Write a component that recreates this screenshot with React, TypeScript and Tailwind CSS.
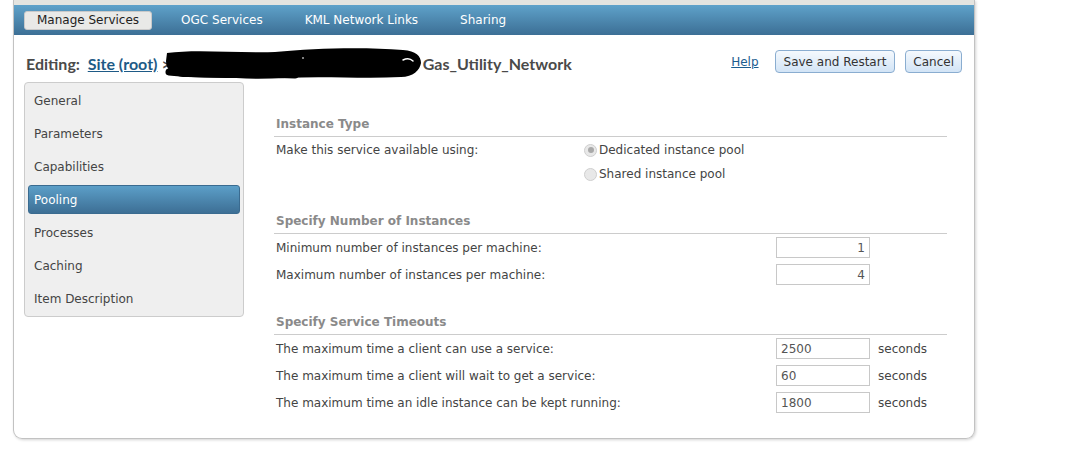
const tabs = ["Manage Services", "OGC Services", "KML Network Links", "Sharing"];

const sideItems = [
  "General",
  "Parameters",
  "Capabilities",
  "Pooling",
  "Processes",
  "Caching",
  "Item Description",
];

const instanceRows = [
  { label: "Minimum number of instances per machine:", value: "1" },
  { label: "Maximum number of instances per machine:", value: "4" },
];

const timeoutRows = [
  { label: "The maximum time a client can use a service:", value: "2500" },
  { label: "The maximum time a client will wait to get a service:", value: "60" },
  { label: "The maximum time an idle instance can be kept running:", value: "1800" },
];

function SectionHeader({ title }: { title: string }) {
  return (
    <div className="border-b border-[#cccccc] pb-[4px] pl-[2px] text-[12px] leading-[16px] font-bold text-[#8a8a8a]">
      {title}
    </div>
  );
}

function Radio({ checked, label }: { checked?: boolean; label: string }) {
  return (
    <div className="flex items-center">
      <span className="w-[13px] h-[13px] rounded-full border border-[#cfcfcf] bg-[#e8e8e8] flex items-center justify-center">
        {checked && <span className="w-[6px] h-[6px] rounded-full bg-[#a9a9a9]" />}
      </span>
      <span className="ml-[2px]">{label}</span>
    </div>
  );
}

function NumberRow({ label, value, unit, alignRight }: { label: string; value: string; unit?: string; alignRight?: boolean }) {
  return (
    <div className="flex items-center h-[27px]">
      <div className="w-[502px] pl-[2px]">{label}</div>
      <input
        readOnly
        value={value}
        className={`w-[94px] h-[21px] border border-[#c8c8c8] px-[4px] text-[12px] text-[#555] outline-none ${alignRight ? "text-right" : "text-left"}`}
      />
      {unit && <span className="ml-[8px]">{unit}</span>}
    </div>
  );
}

// marker scribble over part of the service path
function Scribble() {
  return (
    <svg width="258" height="34" viewBox="0 0 258 34" className="-my-[8px] -ml-[6px] shrink-0">
      <path
        d="M2 6 C 30 2, 70 6, 110 5 C 150 1, 200 0, 238 3 C 251 4, 256 9, 256 16 C 255 23, 248 30, 236 30 C 200 32, 160 29, 120 31 C 85 33, 45 30, 18 30 C 7 29, 1 22, 1 14 Z"
        fill="#000"
      />
      <path d="M4 25 C 40 29, 90 26, 130 28" stroke="#000" strokeWidth="7" strokeLinecap="round" fill="none" />
      <path d="M238 13 C 242 11, 246 12, 248 14" stroke="#fff" strokeWidth="1.5" strokeLinecap="round" fill="none" />
      <path d="M137 11 L 139 11" stroke="#fff" strokeWidth="1" fill="none" />
    </svg>
  );
}

export default function App() {
  return (
    <div className="min-h-screen bg-white font-['DejaVu_Sans',Verdana,sans-serif] text-[12px] text-[#444]">
      <div className="ml-[13px] w-[962px] border-x border-b border-[#c2c2c2] rounded-b-[9px] shadow-[1px_1px_3px_rgba(0,0,0,0.18)]">
        {/* strip above the nav */}
        <div className="h-[5px] bg-[#e4e4e0]" />

        {/* top navigation */}
        <nav className="h-[30px] bg-linear-to-b from-[#5fa2ca] to-[#3c6f95] flex items-center pl-[10px] gap-[16px] text-[12px]">
          {tabs.map((t, i) =>
            i === 0 ? (
              <div
                key={t}
                className="h-[19px] px-[12px] flex items-center rounded-[3px] border border-[#c9c9c9] bg-[#e9e9e7] text-[#222]"
              >
                {t}
              </div>
            ) : (
              <div key={t} className="px-[13px] text-white">
                {t}
              </div>
            )
          )}
        </nav>

        {/* title + actions */}
        <div className="h-[47px] pt-[6px] px-[12px] flex items-center">
          <div className="mt-[5px] flex items-center font-['Lato',sans-serif] font-bold text-[16px] text-[#4a4a4a]">
            <span>Editing:&nbsp;&nbsp;</span>
            <a className="underline text-[#1e5a86]">Site (root)</a>
            <span>&nbsp;&gt;</span>
            <Scribble />
            <span>Gas_Utility_Network</span>
          </div>
          <div className="ml-auto flex items-center">
            <a className="underline text-[#1c5d8f] mr-[16px]">Help</a>
            <button className="h-[23px] px-[8px] rounded-[4px] border border-[#8aadd0] bg-linear-to-b from-[#f5f9fd] to-[#d2e4f6] text-[#333]">
              Save and Restart
            </button>
            <button className="ml-[10px] h-[23px] px-[7px] rounded-[4px] border border-[#8aadd0] bg-linear-to-b from-[#f5f9fd] to-[#d2e4f6] text-[#333]">
              Cancel
            </button>
          </div>
        </div>

        <div className="flex items-start pb-[22px]">
          {/* side menu */}
          <div className="ml-[10px] w-[220px] rounded-[4px] border border-[#cccccc] bg-[#efefef] p-[3px] flex flex-col gap-[4px]">
            {sideItems.map((s) =>
              s === "Pooling" ? (
                <div
                  key={s}
                  className="h-[29px] pl-[5px] flex items-center rounded-[3px] border border-[#3a6b90] bg-linear-to-b from-[#5c9fc8] to-[#3d6f95] text-white"
                >
                  {s}
                </div>
              ) : (
                <div key={s} className="h-[29px] pl-[6px] flex items-center">
                  {s}
                </div>
              )
            )}
          </div>

          {/* pooling settings */}
          <div className="ml-[30px] mr-[27px] flex-1 pt-[34px]">
            <SectionHeader title="Instance Type" />
            <div className="flex h-[25px] pt-[1px] items-center">
              <div className="w-[310px] pl-[2px]">Make this service available using:</div>
              <Radio checked label="Dedicated instance pool" />
            </div>
            <div className="flex h-[24px] items-center">
              <div className="w-[310px]" />
              <Radio label="Shared instance pool" />
            </div>

            <div className="mt-[27px]">
              <SectionHeader title="Specify Number of Instances" />
              {instanceRows.map((r) => (
                <NumberRow key={r.label} label={r.label} value={r.value} alignRight />
              ))}
            </div>

            <div className="mt-[26px]">
              <SectionHeader title="Specify Service Timeouts" />
              {timeoutRows.map((r) => (
                <NumberRow key={r.label} label={r.label} value={r.value} unit="seconds" />
              ))}
            </div>
          </div>
        </div>
      </div>
    </div>
  );
}
